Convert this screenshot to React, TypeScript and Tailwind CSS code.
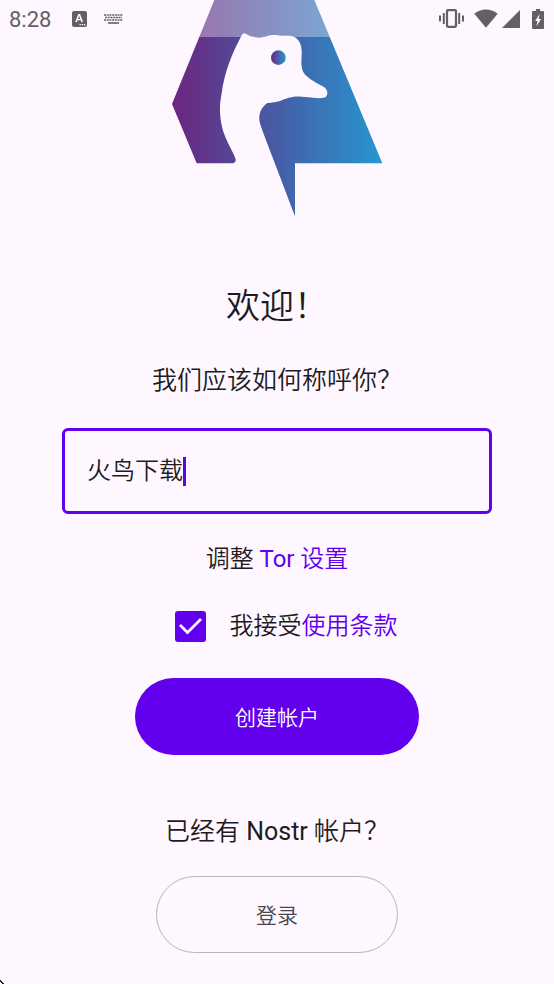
import { useState } from "react";

const StatusBar = () => {
  return (
    <header className="absolute inset-x-0 top-0 z-10 flex h-[37px] items-center justify-between bg-[#fef7ff]/35 pl-[9px] pr-[10px] font-normal text-[#636064]">
      <div className="flex items-center">
        <time className="w-[63px] pt-0.5 text-[22px] leading-6">8:28</time>
        <svg className="mr-[17px] h-4 w-[15px]" viewBox="0 0 15 16" aria-hidden="true">
          <rect width="15" height="16" rx="2" fill="currentColor" />
          <path
            d="M6.3 3h1.8l3 8H9.3l-.6-1.7H5.6L5 11H3.2zM7.2 5l-1.1 3h2.2z"
            fill="#fef7ff"
            fillRule="evenodd"
          />
          <path d="M7.5 13h1.4v1.2H7.5zM9.7 13h1.4v1.2H9.7zM11.9 13h1.4v1.2h-1.4z" fill="#fef7ff" />
        </svg>
        <svg className="h-[10px] w-[19px]" viewBox="0 0 19 10" fill="none" stroke="currentColor" aria-hidden="true">
          <path d="M0 1h19M1 3.5h17M0 6h19" strokeWidth="1.5" strokeDasharray="2 0.7" />
          <path d="M4 9h11" strokeWidth="1.6" />
        </svg>
      </div>
      <div className="flex items-center">
        <svg className="mr-[10px] h-[19px] w-[25px]" viewBox="0 0 25 19" fill="none" stroke="currentColor" aria-hidden="true">
          <rect x="8" y="1.2" width="9" height="16.6" rx="1" strokeWidth="2.2" />
          <path d="M4.8 4v11M20.2 4v11" strokeWidth="2" />
          <path d="M1 6.5v6M24 6.5v6" strokeWidth="2" />
        </svg>
        <svg className="mr-1 h-[19px] w-6" viewBox="0 0 24 19" fill="currentColor" aria-hidden="true">
          <path d="M12 18.8.3 4.8C3.2 2 7.4.4 12 .4S20.8 2 23.7 4.8z" />
        </svg>
        <svg className="mr-3 h-[18px] w-[18px]" viewBox="0 0 18 18" fill="currentColor" aria-hidden="true">
          <path d="M0 18 18 0v18z" />
        </svg>
        <svg className="h-5 w-3" viewBox="0 0 12 20" aria-hidden="true">
          <path d="M4 0h4v2h3a1 1 0 0 1 1 1v16a1 1 0 0 1-1 1H1a1 1 0 0 1-1-1V3a1 1 0 0 1 1-1h3z" fill="currentColor" />
          <path d="M7.6 5 3.1 12h2.3l-.8 5.2L9 10H6.7z" fill="#fef7ff" />
        </svg>
      </div>
    </header>
  );
};

const Logo = () => {
  return (
    <svg className="h-[217px] w-[211px]" viewBox="36 0 633 651" role="img" aria-label="Amethyst">
      <defs>
        <linearGradient id="body" gradientUnits="userSpaceOnUse" x1="36" y1="330" x2="667" y2="330">
          <stop offset="0" stopColor="#6b2780" />
          <stop offset="0.15" stopColor="#61358a" />
          <stop offset="0.3" stopColor="#544794" />
          <stop offset="0.55" stopColor="#4363aa" />
          <stop offset="1" stopColor="#2697d0" />
        </linearGradient>
        <linearGradient id="eye">
          <stop offset="0" stopColor="#6b2780" />
          <stop offset="0.5" stopColor="#4760a8" />
          <stop offset="1" stopColor="#2697d0" />
        </linearGradient>
      </defs>
      <path
        fill="url(#body)"
        d="M163 0 36 312 110 490H220Q230 486 226 475C214 444 194 416 186 380C178 345 178 316 185 280C193 218 215 161 246 104Q251 96 260 103C272 113 307 115 322 108C340 102 352 107 366 107C382 108 395 104 408 114C424 126 426 147 425 166C424 184 422 204 432 220C446 238 470 249 492 261C504 268 505 286 496 292C484 298 448 291 425 290C398 288 385 294 367 300C346 308 337 308 322 309C302 323 295 344 299 366C307 396 334 459 405 649V490H667L463 0Z"
      />
      <circle cx="355" cy="173" r="22" fill="url(#eye)" />
    </svg>
  );
};

const App = () => {
  const [name, setName] = useState("火鸟下载");
  const [accepted, setAccepted] = useState(true);

  return (
    <div
      lang="zh-CN"
      className="relative min-h-screen bg-[#fef7ff] font-[Roboto,'Noto_Sans_CJK_SC',sans-serif] font-[350] text-[#1d1b20]"
    >
      <StatusBar />

      <main className="flex flex-col items-center px-[62px] pb-[31px] text-2xl leading-8">
        <Logo />

        <h1 className="mt-[69px] text-[34px] leading-10 font-[350]">{"欢迎\uff01"}</h1>

        <label htmlFor="name" className="mt-[39px] text-[25px]">
          {"我们应该如何称呼你\uff1f"}
        </label>

        <div className="mt-[31px] flex h-[86px] w-full items-center rounded-md border-3 border-[#6200ee] pl-[22px]">
          <input
            id="name"
            type="text"
            value={name}
            onChange={(e) => setName(e.target.value)}
            className="field-sizing-content max-w-[90%] caret-transparent outline-none"
          />
          <span className="h-[29px] w-[3px] bg-[#6200ee]" aria-hidden="true" />
        </div>

        <p className="mt-[29px]">
          调整{" "}
          <a href="#tor" className="text-[#6200ee]">
            <span className="font-normal">Tor</span> 设置
          </a>
        </p>

        <div className="mt-[35px] flex items-center gap-6 pl-[18px]">
          <span className="relative flex">
            <input
              id="terms"
              type="checkbox"
              checked={accepted}
              onChange={(e) => setAccepted(e.target.checked)}
              className="h-[31px] w-[31px] appearance-none rounded-[3px] border-3 border-[#6200ee] checked:bg-[#6200ee]"
            />
            {accepted && (
              <svg className="pointer-events-none absolute inset-0" viewBox="0 0 31 31" aria-hidden="true">
                <path d="m5 14 7.5 7.5L26 8" fill="none" stroke="#fef7ff" strokeWidth="2.8" />
              </svg>
            )}
          </span>
          <p>
            <label htmlFor="terms">我接受</label>
            <a href="#terms-of-use" className="text-[#6200ee]">
              使用条款
            </a>
          </p>
        </div>

        <button
          type="button"
          className="mt-9 h-[77px] rounded-full bg-[#6200ee] px-[100px] pt-0.5 text-[21px] text-white"
        >
          创建帐户
        </button>

        <p className="mt-[61px] text-[25px]">
          已经有 <span className="font-normal">Nostr</span> {"帐户\uff1f"}
        </p>

        <button
          type="button"
          className="mt-7 h-[77px] rounded-full border border-[#b9b4be] px-[99px] pt-0.5 text-[21px] text-[#49454f]"
        >
          登录
        </button>
      </main>

      <svg className="absolute bottom-0 left-0 h-1 w-1" viewBox="0 0 4 4" aria-hidden="true">
        <path d="M0 0h1v1h1v1h1v1h1v1H2V3H1V2H0z" fill="#1d1b20" />
      </svg>
    </div>
  );
};

export default App;
